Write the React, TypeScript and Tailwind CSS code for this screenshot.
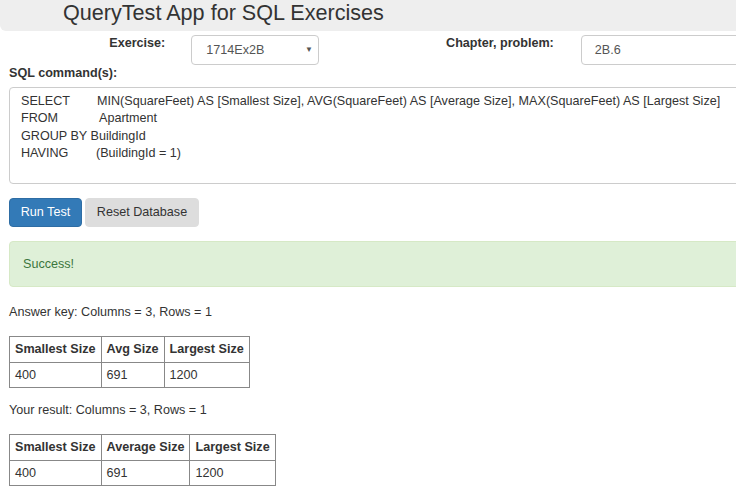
import React from 'react'

interface Row {
  [key: string]: string
}

const sqlLines = [
  { kw: 'SELECT', w: 'w-[76px]', rest: 'MIN(SquareFeet) AS [Smallest Size], AVG(SquareFeet) AS [Average Size], MAX(SquareFeet) AS [Largest Size]' },
  { kw: 'FROM', w: 'w-[78px]', rest: 'Apartment' },
  { kw: 'GROUP BY BuildingId', w: '', rest: '' },
  { kw: 'HAVING', w: 'w-[75px]', rest: '(BuildingId = 1)' },
]

function ResultTable({ columns, rows }: { columns: string[]; rows: Row[] }) {
  return (
    <table className="border-collapse text-[12.6px] leading-[15px]">
      <thead>
        <tr>
          {columns.map((c) => (
            <th key={c} className="border border-[#888] px-[5px] h-[26px] text-left font-bold">
              {c}
            </th>
          ))}
        </tr>
      </thead>
      <tbody>
        {rows.map((r, i) => (
          <tr key={i}>
            {columns.map((c) => (
              <td key={c} className="border border-[#888] px-[5px] h-[25px]">
                {r[c]}
              </td>
            ))}
          </tr>
        ))}
      </tbody>
    </table>
  )
}

export default function App() {
  return (
    <div
      className="w-[736px] h-[489px] overflow-hidden bg-white text-[#333]"
      style={{ fontFamily: '"Liberation Sans", Arial, sans-serif' }}
    >
      {/* Header */}
      <div className="w-[780px] h-[31px] bg-[#eee] rounded-bl-[6px] pl-[63px] flex items-center">
        <h1 className="text-[21.6px] leading-none text-[#333] -mt-[5px]">QueryTest App for SQL Exercises</h1>
      </div>

      <div className="w-[780px] pl-[9px]">
        {/* Exercise / chapter row */}
        <div className="flex items-start mt-[4px] h-[30px]">
          <label className="w-[172px] text-right pr-[15px] text-[12.6px] font-bold leading-[18px] mt-[-1px]">
            Exercise:
          </label>
          <div className="ml-[11px] w-[128px] h-[30px] border border-[#ccc] rounded-[4px] flex items-center justify-between pl-[14px] pr-[5px] text-[12.6px] text-[#555]">
            <span>1714Ex2B</span>
            <span className="text-[8px] text-[#555]">▼</span>
          </div>
          <label className="w-[251px] text-right pr-[15px] text-[12.6px] font-bold leading-[18px] mt-[-1px]">
            Chapter, problem:
          </label>
          <div className="ml-[12px] w-[200px] h-[30px] border border-[#ccc] rounded-[4px] flex items-center pl-[13px] text-[12.6px] text-[#555]">
            2B.6
          </div>
        </div>

        {/* SQL */}
        <div className="text-[12.6px] font-bold leading-[16px]">SQL command(s):</div>
        <div className="mt-[6px] h-[97px] border border-[#ccc] rounded-[4px] pl-[11px] pt-[5px] text-[12.6px] leading-[17.3px] text-[#333] whitespace-pre">
          {sqlLines.map((l) => (
            <div key={l.kw}>
              <span className={l.w ? `inline-block ${l.w}` : ''}>{l.kw}</span>
              {l.rest}
            </div>
          ))}
        </div>

        {/* Buttons */}
        <div className="flex gap-[3px] mt-[14px]">
          <button className="h-[29px] w-[73px] rounded-[4px] bg-[#337ab7] border border-[#2e6da4] text-white text-[12.6px]">
            Run Test
          </button>
          <button className="h-[29px] w-[114px] rounded-[4px] bg-[#ddd] border border-[#ddd] text-[#333] text-[12.6px]">
            Reset Database
          </button>
        </div>

        {/* Alert */}
        <div className="mt-[14px] h-[46px] rounded-[4px] bg-[#dff0d8] border border-[#d6e9c6] text-[#3c763d] text-[12.6px] pl-[13px] flex items-center">
          Success!
        </div>

        <div className="mt-[16px] text-[12.6px] leading-[18px]">Answer key: Columns = 3, Rows = 1</div>
        <div className="mt-[15px]">
          <ResultTable
            columns={['Smallest Size', 'Avg Size', 'Largest Size']}
            rows={[{ 'Smallest Size': '400', 'Avg Size': '691', 'Largest Size': '1200' }]}
          />
        </div>

        <div className="mt-[13px] text-[12.6px] leading-[18px]">Your result: Columns = 3, Rows = 1</div>
        <div className="mt-[15px]">
          <ResultTable
            columns={['Smallest Size', 'Average Size', 'Largest Size']}
            rows={[{ 'Smallest Size': '400', 'Average Size': '691', 'Largest Size': '1200' }]}
          />
        </div>
      </div>
    </div>
  )
}
